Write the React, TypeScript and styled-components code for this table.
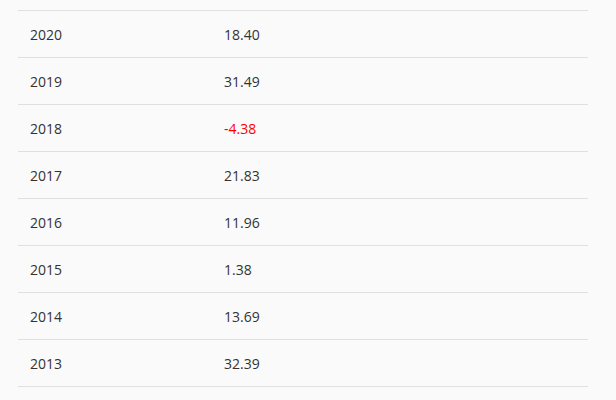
import React from "react";
import styled, { createGlobalStyle } from "styled-components";

const Global = createGlobalStyle`
  html, body { margin: 0; padding: 0; background: #fafafa; }
  body { font-family: "Open Sans", "Segoe UI", sans-serif; }
`;

const Wrap = styled.div`
  padding: 10px 28px 0 18px;
`;

const Table = styled.table`
  width: 100%;
  border-collapse: collapse;
  font-size: 14px;
  color: #333;
`;

const Row = styled.tr`
  border-top: 1px solid #e0e0e0;
  border-bottom: 1px solid #e0e0e0;
`;

const Cell = styled.td<{ $w?: number; $neg?: boolean }>`
  height: 46px;
  padding: 0 12px;
  vertical-align: middle;
  width: ${(p) => (p.$w ? `${p.$w}px` : "auto")};
  color: ${(p) => (p.$neg ? "#ff0000" : "#333")};
`;

const data: [string, string][] = [
  ["2020", "18.40"],
  ["2019", "31.49"],
  ["2018", "-4.38"],
  ["2017", "21.83"],
  ["2016", "11.96"],
  ["2015", "1.38"],
  ["2014", "13.69"],
  ["2013", "32.39"],
];

export default function App() {
  return (
    <>
      <Global />
      <Wrap>
        <Table>
          <tbody>
            {data.map(([y, v]) => (
              <Row key={y}>
                <Cell $w={170}>{y}</Cell>
                <Cell $neg={v.startsWith("-")}>{v}</Cell>
              </Row>
            ))}
          </tbody>
        </Table>
      </Wrap>
    </>
  );
}
